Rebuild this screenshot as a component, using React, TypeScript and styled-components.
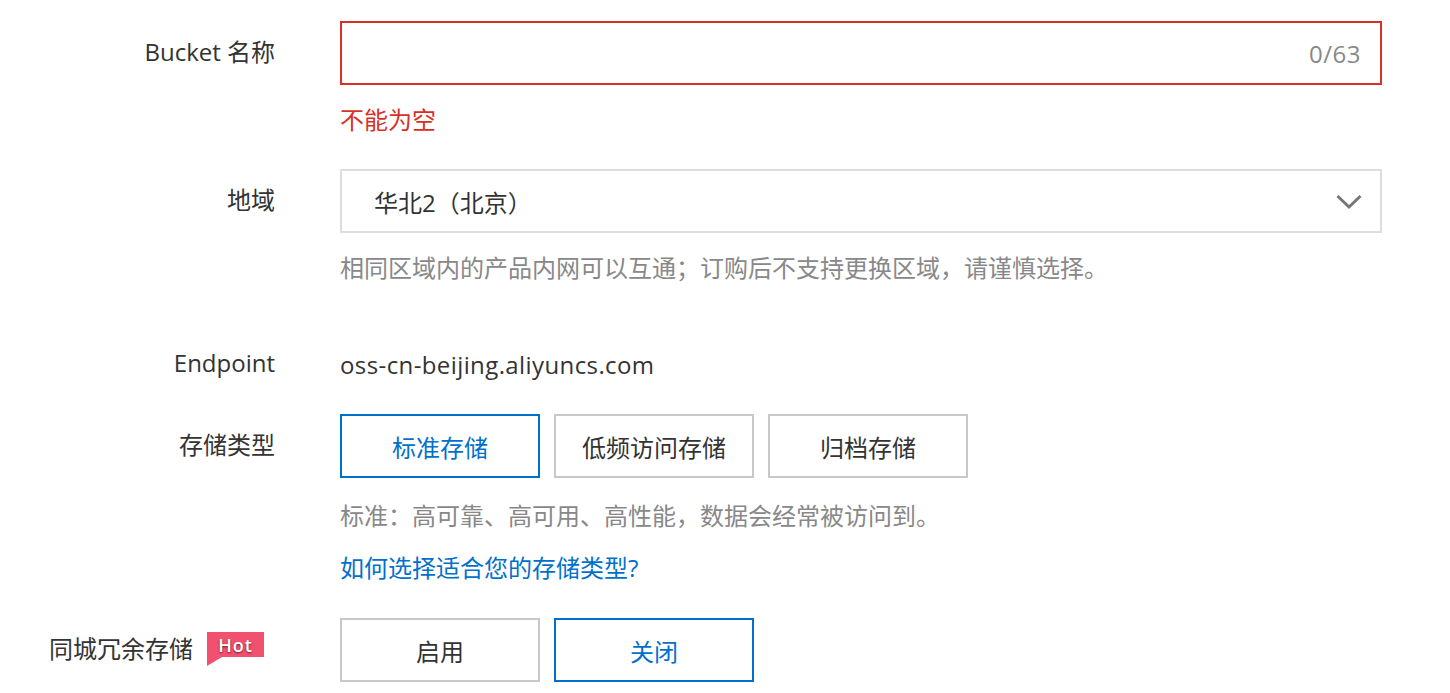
import React from "react";
import styled, { createGlobalStyle } from "styled-components";

const Global = createGlobalStyle`
  html, body { margin: 0; padding: 0; background: #fff; }
  body {
    font-family: "Open Sans", "Noto Sans CJK SC", sans-serif;
    font-size: 24px;
    color: #333;
  }
  * { box-sizing: border-box; }
`;

const Form = styled.div`
  padding-top: 21px;
  display: flex;
  flex-direction: column;
`;

const Row = styled.div<{ $mb?: number }>`
  display: grid;
  grid-template-columns: 275px 1042px;
  column-gap: 65px;
  margin-bottom: ${(p) => p.$mb ?? 0}px;
`;

const Label = styled.div<{ $h?: number }>`
  display: flex;
  align-items: center;
  justify-content: flex-end;
  height: ${(p) => p.$h ?? 64}px;
  padding-bottom: 5px;
  color: #333;
  white-space: nowrap;
`;

const Control = styled.div`
  display: flex;
  flex-direction: column;
`;

const InputBox = styled.div<{ $error?: boolean }>`
  height: 64px;
  border: 2px solid ${(p) => (p.$error ? "#d93026" : "#ddd")};
  display: flex;
  align-items: center;
  justify-content: flex-end;
  padding: 0 19px 0 32px;
`;

const Counter = styled.span`
  color: #888;
  letter-spacing: 0.5px;
`;

const SelectBox = styled.div`
  height: 64px;
  border: 2px solid #ddd;
  display: flex;
  align-items: center;
  justify-content: space-between;
  padding: 1px 18px 0 32px;
  color: #333;
`;

const Message = styled.div<{ $tone: "error" | "help" | "link"; $mt: number }>`
  margin-top: ${(p) => p.$mt}px;
  line-height: 32px;
  color: ${(p) =>
    p.$tone === "error" ? "#d93026" : p.$tone === "link" ? "#0070cc" : "#888"};
`;

const Value = styled.div`
  height: 32px;
  line-height: 32px;
  color: #333;
  letter-spacing: 0.4px;
`;

const ButtonGroup = styled.div`
  display: flex;
  gap: 14px;
`;

const OptionButton = styled.div<{ $active?: boolean }>`
  width: 200px;
  height: 64px;
  border: 2px solid ${(p) => (p.$active ? "#0070cc" : "#c8c8c8")};
  color: ${(p) => (p.$active ? "#0070cc" : "#333")};
  display: flex;
  align-items: center;
  justify-content: center;
`;

const HotBadge = styled.span`
  position: relative;
  display: inline-flex;
  align-items: center;
  justify-content: center;
  width: 57px;
  height: 25px;
  margin-left: 14px;
  margin-right: 11px;
  margin-top: -6px;
  background: #f2506f;
  color: #fff;
  font-size: 18px;
  font-weight: 600;
  letter-spacing: 1px;
  text-shadow: 0 1px 2px rgba(0, 0, 0, 0.6);
  &::after {
    content: "";
    position: absolute;
    left: 0;
    top: 25px;
    width: 0;
    height: 0;
    border-top: 9px solid #f2506f;
    border-right: 15px solid transparent;
  }
`;

const Chevron = () => (
  <svg width="26" height="16" viewBox="0 0 26 16" fill="none">
    <path d="M1.5 2 L13 13 L24.5 2" stroke="#777" strokeWidth="3" />
  </svg>
);

export default function App() {
  return (
    <>
      <Global />
      <Form>
        <Row $mb={33}>
          <Label>Bucket 名称</Label>
          <Control>
            <InputBox $error>
              <Counter>0/63</Counter>
            </InputBox>
            <Message $tone="error" $mt={19}>不能为空</Message>
          </Control>
        </Row>
        <Row $mb={65}>
          <Label>地域</Label>
          <Control>
            <SelectBox>
              <span>华北2（北京）</span>
              <Chevron />
            </SelectBox>
            <Message $tone="help" $mt={19}>
              相同区域内的产品内网可以互通；订购后不支持更换区域，请谨慎选择。
            </Message>
          </Control>
        </Row>
        <Row $mb={33}>
          <Label $h={32}>Endpoint</Label>
          <Control>
            <Value>oss-cn-beijing.aliyuncs.com</Value>
          </Control>
        </Row>
        <Row $mb={34}>
          <Label>存储类型</Label>
          <Control>
            <ButtonGroup>
              <OptionButton $active>标准存储</OptionButton>
              <OptionButton>低频访问存储</OptionButton>
              <OptionButton>归档存储</OptionButton>
            </ButtonGroup>
            <Message $tone="help" $mt={22}>
              标准：高可靠、高可用、高性能，数据会经常被访问到。
            </Message>
            <Message $tone="link" $mt={20}>如何选择适合您的存储类型?</Message>
          </Control>
        </Row>
        <Row>
          <Label>
            同城冗余存储
            <HotBadge>Hot</HotBadge>
          </Label>
          <Control>
            <ButtonGroup>
              <OptionButton>启用</OptionButton>
              <OptionButton $active>关闭</OptionButton>
            </ButtonGroup>
          </Control>
        </Row>
      </Form>
    </>
  );
}
